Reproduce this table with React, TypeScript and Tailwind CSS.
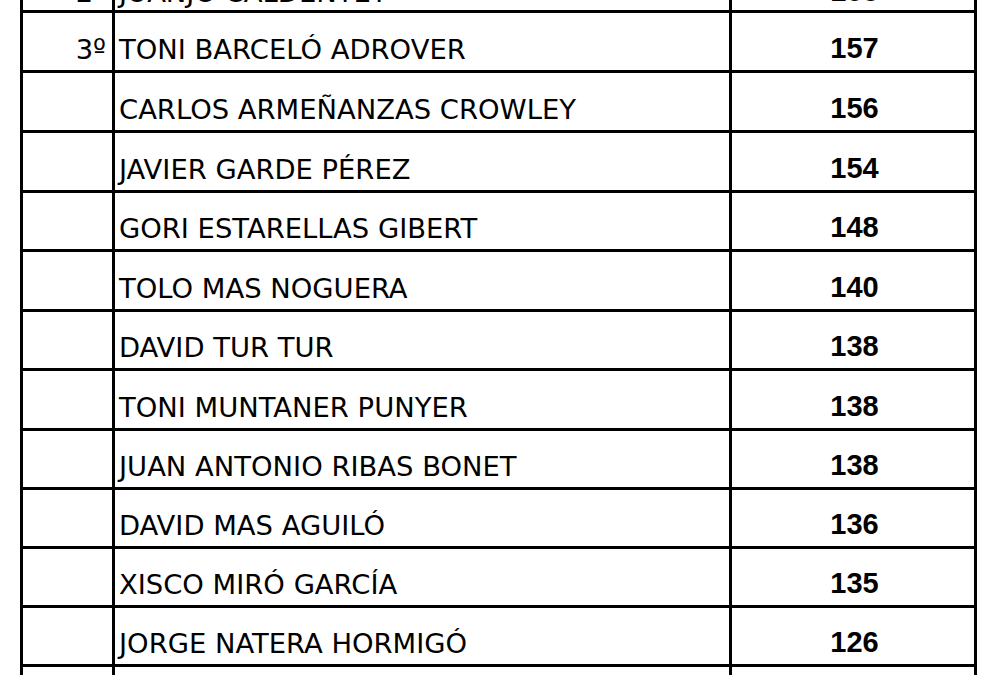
import React from "react";

type Row = { pos: string; name: string; pts: string; h: string };

const rows: Row[] = [
  { pos: "3º", name: "TONI BARCELÓ ADROVER", pts: "157", h: "h-[60px]" },
  { pos: "", name: "CARLOS ARMEÑANZAS CROWLEY", pts: "156", h: "h-[60px]" },
  { pos: "", name: "JAVIER GARDE PÉREZ", pts: "154", h: "h-[60px]" },
  { pos: "", name: "GORI ESTARELLAS GIBERT", pts: "148", h: "h-[59px]" },
  { pos: "", name: "TOLO MAS NOGUERA", pts: "140", h: "h-[60px]" },
  { pos: "", name: "DAVID TUR TUR", pts: "138", h: "h-[59px]" },
  { pos: "", name: "TONI MUNTANER PUNYER", pts: "138", h: "h-[60px]" },
  { pos: "", name: "JUAN ANTONIO RIBAS BONET", pts: "138", h: "h-[59px]" },
  { pos: "", name: "DAVID MAS AGUILÓ", pts: "136", h: "h-[59px]" },
  { pos: "", name: "XISCO MIRÓ GARCÍA", pts: "135", h: "h-[59px]" },
  { pos: "", name: "JORGE NATERA HORMIGÓ", pts: "126", h: "h-[59px]" },
];

const nameFont = { fontFamily: '"DejaVu Sans", Verdana, sans-serif' };
const numFont = { fontFamily: '"Liberation Sans", Arial, sans-serif' };

function TableRow({
  pos,
  name,
  pts,
  h,
  last,
  pb,
}: Row & { last?: boolean; pb?: string }) {
  const p = pb ?? "pb-[7px]";
  return (
    <div className={`flex ${h} ${last ? "" : "border-b-[3px] border-black"}`}>
      <div
        className={`w-[89px] flex items-end justify-end pr-[6px] ${p} overflow-hidden text-[27.4px] leading-none text-black`}
        style={nameFont}
      >
        {pos}
      </div>
      <div
        className={`w-[617px] border-l-[3px] border-black flex items-end pl-[4px] ${p} overflow-hidden text-[27.4px] leading-none text-black whitespace-nowrap`}
        style={nameFont}
      >
        {name}
      </div>
      <div
        className={`w-[239px] border-l-[3px] border-black flex items-end justify-center pl-[9px] ${p} overflow-hidden text-[29px] font-bold leading-none text-black`}
        style={numFont}
      >
        {pts}
      </div>
    </div>
  );
}

export default function App() {
  return (
    <div className="w-[996px] h-[675px] bg-white overflow-hidden">
      <div className="ml-[20px] w-[957px] border-x-[3px] border-black">
        <TableRow pos="2º" name="JUANJO CALDENTEY" pts="158" h="h-[13px]" pb="pb-[4px]" />
        {rows.map((r, i) => (
          <TableRow key={i} {...r} />
        ))}
        <TableRow pos="" name="" pts="" h="h-[20px]" last />
      </div>
    </div>
  );
}
